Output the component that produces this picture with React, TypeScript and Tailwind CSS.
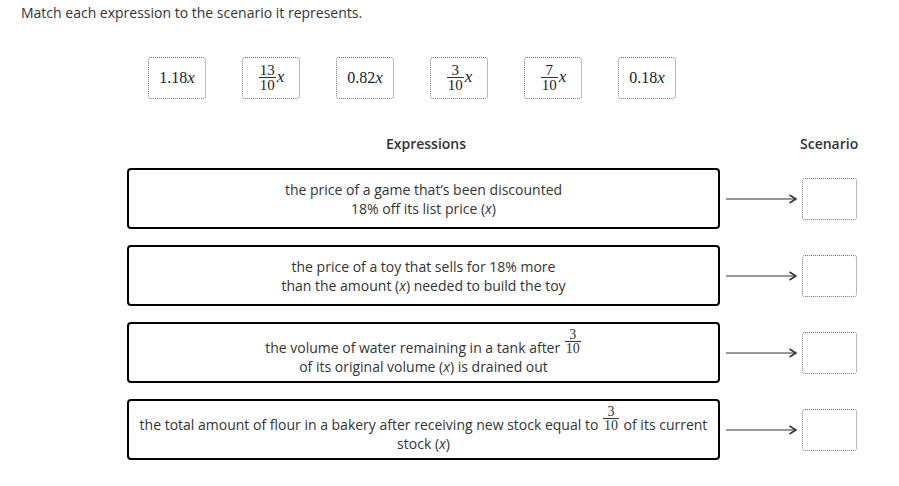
import React from "react";

const Frac = ({
  n,
  d,
  size = "text-[14px] leading-[12px]",
  align = "align-baseline",
}: {
  n: string;
  d: string;
  size?: string;
  align?: string;
}) => (
  <span className={`inline-block ${align} text-center font-['Liberation_Serif',serif] ${size} mx-[1px]`}>
    <span className="block px-[1px]">{n}</span>
    <span className="block border-t border-[#333] px-[1px] pt-[1px]">{d}</span>
  </span>
);

const X = () => <i className="font-['Liberation_Serif',serif] text-[17px]">x</i>;

const Tile = ({ children }: { children: React.ReactNode }) => (
  <div className="w-[58px] h-[42px] flex items-center justify-center border border-dotted border-[#777] rounded-[3px] bg-white font-['Liberation_Serif',serif] text-[16px] text-[#222]">
    <span>{children}</span>
  </div>
);

const Arrow = () => (
  <svg width="71" height="12" viewBox="0 0 71 12" className="block">
    <line x1="0" y1="6" x2="70" y2="6" stroke="#333" strokeWidth="1" />
    <polyline points="63.5,2 70,6 63.5,10" fill="none" stroke="#333" strokeWidth="1.5" />
  </svg>
);

const Row = ({ children }: { children: React.ReactNode }) => (
  <div className="flex items-center">
    <div className="w-[593px] h-[61px] border-2 border-black rounded-[4px] flex items-center justify-center text-center leading-[19px] px-2">
      <div>{children}</div>
    </div>
    <div className="ml-[6px] w-[71px]">
      <Arrow />
    </div>
    <div className="ml-[5px] w-[55px] h-[42px] border border-dotted border-[#777] rounded-[3px]" />
  </div>
);

const TF = ({ n }: { n: string }) => (
  <Frac n={n} d="10" size="text-[15px] leading-[13px]" align="align-middle" />
);

export default function App() {
  return (
    <div className="w-[899px] h-[486px] bg-white font-['Open_Sans',sans-serif] text-[14px] text-[#333] overflow-hidden">
      <p className="pl-[21px] pt-[3px] leading-[19px]">Match each expression to the scenario it represents.</p>
      <div className="flex gap-[36px] pl-[148px] mt-[35px]">
        <Tile>
          1.18<X />
        </Tile>
        <Tile>
          <TF n="13" />
          <X />
        </Tile>
        <Tile>
          0.82<X />
        </Tile>
        <Tile>
          <TF n="3" />
          <X />
        </Tile>
        <Tile>
          <TF n="7" />
          <X />
        </Tile>
        <Tile>
          0.18<X />
        </Tile>
      </div>
      <div className="pl-[127px] mt-[35px]">
        <div className="flex items-center h-[19px] leading-[19px] font-semibold">
          <div className="w-[593px] text-center pl-[5px]">Expressions</div>
          <div className="ml-[80px] w-[55px] text-center">Scenario</div>
        </div>
        <div className="mt-[15px] flex flex-col gap-[16px]">
          <Row>
            the price of a game that’s been discounted
            <br />
            18% off its list price (<i>x</i>)
          </Row>
          <Row>
            the price of a toy that sells for 18% more
            <br />
            than the amount (<i>x</i>) needed to build the toy
          </Row>
          <Row>
            the volume of water remaining in a tank after <Frac n="3" d="10" />
            <br />
            of its original volume (<i>x</i>) is drained out
          </Row>
          <Row>
            the total amount of flour in a bakery after receiving new stock equal to <Frac n="3" d="10" /> of its current
            <br />
            stock (<i>x</i>)
          </Row>
        </div>
      </div>
    </div>
  );
}
